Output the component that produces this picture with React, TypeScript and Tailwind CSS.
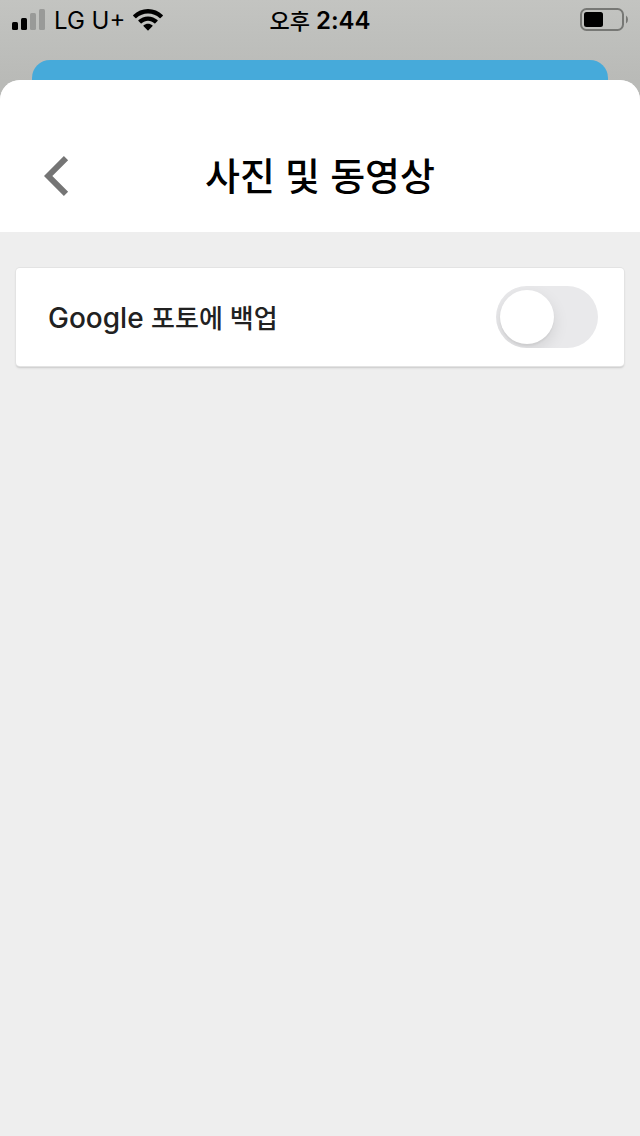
import { useState } from "react";

function SignalIcon() {
  return (
    <svg width="34" height="22" viewBox="0 0 34 22" aria-hidden>
      <rect x="0" y="13" width="6" height="8" rx="1.5" />
      <rect x="9" y="9" width="6" height="12" rx="1.5" />
      <rect x="18" y="4" width="6" height="17" rx="1.5" fill="#999a98" />
      <rect x="27" y="0" width="6" height="21" rx="1.5" fill="#999a98" />
    </svg>
  );
}

function WifiIcon() {
  return (
    <svg width="30" height="22" viewBox="0 0 30 22" aria-hidden>
      <path d="M15 0C20.600 0 25.800 2.200 29.700 5.900Q30.200 6.400 29.700 6.900L27.600 9Q27.100 9.400 26.600 9C23.500 6 19.400 4.400 15 4.400S6.500 6 3.400 9Q2.900 9.400 2.400 9L.3 6.900Q-.2 6.400 .3 5.900C4.200 2.200 9.400 0 15 0Z" />
      <path d="M15 7.400C18.700 7.400 22 8.800 24.500 11.100Q25 11.600 24.500 12.100L22.300 14.200Q21.800 14.600 21.300 14.200C19.600 12.700 17.400 11.800 15 11.800S10.400 12.700 8.700 14.200Q8.200 14.600 7.700 14.200L5.500 12.100Q5 11.600 5.500 11.100C8 8.800 11.300 7.400 15 7.400Z" />
      <path d="M15 14.700C16.700 14.700 18.200 15.300 19.400 16.300Q19.900 16.800 19.400 17.300L15.500 21.200Q15 21.700 14.500 21.200L10.600 17.300Q10.100 16.800 10.600 16.300C11.800 15.300 13.300 14.700 15 14.700Z" />
    </svg>
  );
}

function BatteryIcon() {
  return (
    <svg width="48" height="24" viewBox="0 0 48 24" aria-hidden>
      <rect x="1" y="1" width="42" height="21" rx="5.500" fill="none" stroke="#777875" strokeWidth="2" />
      <rect x="4" y="4" width="19" height="15" rx="2.500" />
      <path d="M46 7.500Q48 9 48 11.500T46 15.500Z" fill="#777875" />
    </svg>
  );
}

function StatusBar() {
  return (
    <div className="grid h-10 grid-cols-[1fr_auto_1fr] items-center px-3">
      <div className="flex items-center gap-2">
        <SignalIcon />
        <span className="pt-0.5 text-[24px]">LG U+</span>
        <WifiIcon />
      </div>
      <span className="pt-0.5 text-[24px] font-semibold">
        <span className="text-[22px] font-medium">오후</span> 2:44
      </span>
      <div className="flex justify-end">
        <BatteryIcon />
      </div>
    </div>
  );
}

export default function App() {
  const [backup, setBackup] = useState(false);

  return (
    <div className="flex min-h-screen flex-col bg-[#bcbdba] bg-[linear-gradient(#c3c4c1,#b9bab7_80px)] font-[Inter,'Noto_Sans_CJK_KR',sans-serif] text-black">
      <StatusBar />
      <div className="mx-8 mt-5 h-5 rounded-t-[18px] bg-[#46aada]" />

      <main className="flex flex-1 flex-col overflow-hidden rounded-t-[20px] bg-[#eeeeee]">
        <header className="grid h-[152px] grid-cols-[1fr_auto_1fr] items-center bg-white px-10 pt-10">
          <button type="button" aria-label="뒤로" className="justify-self-start p-1">
            <svg width="25" height="40" viewBox="0 0 25 40" fill="none" stroke="#757575" strokeWidth="6" aria-hidden>
              <path d="M22 2.200L4.200 20L22 37.800" />
            </svg>
          </button>
          <h1 className="text-[38px] font-medium">사진 및 동영상</h1>
        </header>

        <section className="mx-4 mt-9 flex h-[98px] items-center justify-between rounded-sm bg-white pl-8 pr-[26px] shadow-[0_0_0_1px_#e3e3e3,0_2px_2px_#c8c8c8]">
          <label htmlFor="backup" className="pt-0.5 text-[28px] font-medium text-[#212121]">
            Google <span className="text-[26px]">포토에 백업</span>
          </label>
          <input
            id="backup"
            type="checkbox"
            role="switch"
            checked={backup}
            onChange={(e) => setBackup(e.target.checked)}
            className="flex h-[62px] w-[102px] appearance-none items-center overflow-hidden rounded-full bg-[#e9e9eb] p-1 before:size-[54px] before:rounded-full before:bg-white before:shadow-[0_6px_16px_rgba(0,0,0,0.1),0_2px_2px_rgba(0,0,0,0.05)] before:transition-transform checked:bg-[#34c759] checked:before:translate-x-10"
          />
        </section>
      </main>
    </div>
  );
}
